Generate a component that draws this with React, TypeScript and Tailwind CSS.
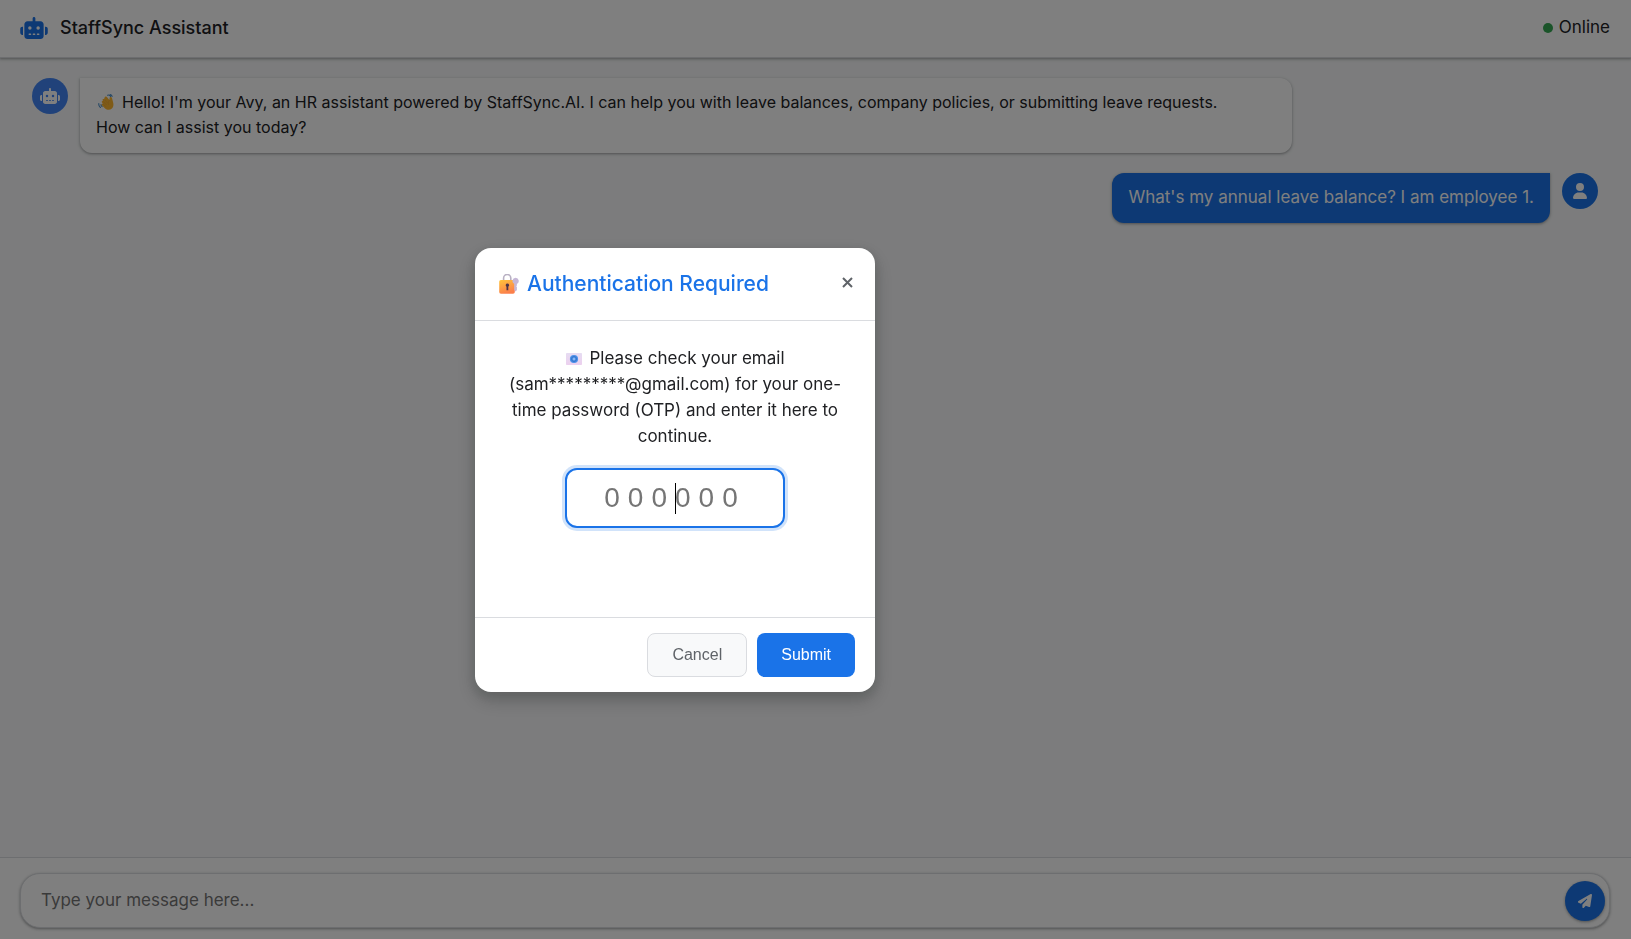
import { FaPaperPlane, FaRobot, FaUser } from "react-icons/fa6";

const cardShadow =
  "shadow-[0_1px_2px_0_rgba(60,64,67,0.3),0_1px_3px_1px_rgba(60,64,67,0.15)]";

function WaveIcon() {
  return (
    <svg viewBox="0 0 16 16" className="mr-2 ml-0.5 inline-block size-4 align-[-2px]" role="img" aria-label="Waving hand">
      <path d="M9.6 1.3c1.2-.6 2.5 0 3 1.3M12.2.6c1 .2 1.7.9 1.9 1.8M.8 9.6c-.2 1.6.3 3 1.6 3.9M3 10.6c0 .9.4 1.6 1.1 2" fill="none" stroke="#4b8fc9" strokeWidth="1.1" strokeLinecap="round" />
      <path d="M7 2.900c.7-.6 1.600-.4 2.100.3l2.200 2.800c.3-.6.2-1.300.3-2 .1-1.200 1.700-1.500 2.200-.4.5 1.300.7 2.800 1.200 4.300.8 2.600.5 5.100-1.100 6.600-1.900 1.700-4.900 1.700-6.800-.1L3.900 11.300c-.8-.9.2-2.100 1.200-1.400L4 8.600c-.8-1.100.4-2.300 1.300-1.300L4.700 6.500c-.6-1 .6-2.100 1.400-1.200l.4.500-.1-.6c-.4-.8-.1-1.700.6-2.300z" fill="#ffb62e" />
      <path d="M6.600 5.600l2.800 3.300M5.400 7.500l2.900 3.200M5.200 10.100l2.200 2.200M11.300 6.400c-1.100 1.300-1.300 2.600-.8 4" fill="none" stroke="#e39a35" strokeWidth="0.5" strokeLinecap="round" />
    </svg>
  );
}

function LockIcon() {
  return (
    <svg viewBox="0 0 20 20" className="size-5" role="img" aria-label="Locked with key">
      <defs>
        <linearGradient id="lock-body" x1="0" y1="0" x2="0.4" y2="1">
          <stop offset="0" stopColor="#ffc53a" />
          <stop offset="1" stopColor="#fb7f4b" />
        </linearGradient>
      </defs>
      <path d="M4.600 8V4a3.600 3.600 0 0 1 7.200 0V8" fill="none" stroke="#b9b1c3" strokeWidth="1.6" />
      <rect x="0.2" y="6" width="15.6" height="13.8" rx="1.8" fill="url(#lock-body)" />
      <path d="M16.600 3.800a3.200 3.200 0 0 1 1.300 6.100v1.500l-.7.800.7.900v2.800l-1.300 1.500-1.300-1.500V9.900a3.200 3.200 0 0 1 1.300-6.100z" fill="#c5b6d6" />
      <path d="M8.400 9.500a1.800 1.800 0 0 1 .9 3.300v3.400H7.500v-3.400a1.800 1.800 0 0 1 .9-3.300z" fill="#4b3346" />
    </svg>
  );
}

function MailIcon() {
  return (
    <svg viewBox="0 0 16 12" className="mr-2 inline-block h-3 w-4 align-[-1px]" role="img" aria-label="E-mail">
      <defs>
        <linearGradient id="mail-body" x1="0" y1="0" x2="0" y2="1">
          <stop offset="0" stopColor="#e6dcf2" />
          <stop offset="1" stopColor="#ecd0ee" />
        </linearGradient>
      </defs>
      <rect width="16" height="12" rx="0.8" fill="url(#mail-body)" />
      <circle cx="8" cy="6" r="4.1" fill="#4a92ea" />
      <circle cx="8" cy="6" r="2.5" fill="none" stroke="#2f66ba" strokeWidth="0.7" />
      <circle cx="8" cy="6" r="1.2" fill="#8db9f2" />
    </svg>
  );
}

function CloseIcon() {
  return (
    <svg viewBox="0 0 11 11" className="size-[11px]" aria-hidden>
      <path d="M1 1l9 9M10 1l-9 9" stroke="currentColor" strokeWidth="2" />
    </svg>
  );
}

function Header() {
  return (
    <header className={`relative flex h-[58px] shrink-0 items-center justify-between border-b border-[#dadce0] bg-white pr-[21px] pb-0.5 pl-5 ${cardShadow}`}>
      <div className="flex items-center gap-3">
        <FaRobot className="h-[22px] w-7 text-[#1a73e8]" aria-hidden />
        <h1 className="text-lg font-medium">StaffSync Assistant</h1>
      </div>
      <p className="flex items-center gap-1.5">
        <span className="size-2.5 rounded-full bg-[#34a853]" />
        Online
      </p>
    </header>
  );
}

function Conversation() {
  return (
    <main className="flex flex-1 flex-col gap-5 py-5 pr-[33px] pl-8">
      <div className="flex items-start gap-3">
        <div className="flex size-9 shrink-0 items-center justify-center rounded-full bg-[#4285f4] text-white">
          <FaRobot className="h-4 w-5" aria-hidden />
        </div>
        <p className={`w-[calc(80%-41px)] rounded-xl rounded-tl-none bg-white px-4 pt-3 pb-[13px] text-base leading-[25px] ${cardShadow}`}>
          <WaveIcon />
          Hello! I'm your Avy, an HR assistant powered by StaffSync.AI. I can help you with leave balances, company
          policies, or submitting leave requests.
          <br />
          How can I assist you today?
        </p>
      </div>
      <div className="flex items-start justify-end gap-3">
        <p className={`rounded-xl rounded-tr-none bg-[#1a73e8] px-4 pt-3 pb-[13px] leading-[25px] text-white ${cardShadow}`}>
          What's my annual leave balance? I am employee 1.
        </p>
        <div className="flex size-9 shrink-0 items-center justify-center rounded-full bg-[#1a73e8] text-white">
          <FaUser className="size-4" aria-hidden />
        </div>
      </div>
    </main>
  );
}

function Composer() {
  return (
    <footer className="border-t border-[#dadce0] bg-white pt-[15px] pr-[21px] pb-[11px] pl-5">
      <form className={`flex h-[55px] items-center rounded-[20px] border border-[#dadce0] bg-white pr-1 pl-5 ${cardShadow}`}>
        <input
          type="text"
          aria-label="Message"
          placeholder="Type your message here..."
          className="min-w-0 flex-1 bg-transparent outline-none placeholder:text-[#757575]"
        />
        <button type="button" aria-label="Send" className={`flex size-10 items-center justify-center rounded-full bg-[#1a73e8] text-white ${cardShadow}`}>
          <FaPaperPlane className="size-3.5" aria-hidden />
        </button>
      </form>
    </footer>
  );
}

function AuthDialog() {
  return (
    <div className="fixed inset-0 flex items-center justify-center bg-black/50 pr-[281px]">
      <section
        role="dialog"
        aria-modal="true"
        aria-labelledby="auth-title"
        className="w-[400px] rounded-2xl bg-white shadow-[0_4px_8px_3px_rgba(60,64,67,0.15),0_8px_20px_rgba(0,0,0,0.2)]"
      >
        <div className="flex h-[73px] items-center justify-between border-b border-[#dadce0] px-5">
          <h2 id="auth-title" className="flex items-center gap-2 pl-1 text-[21px] font-medium text-[#1a73e8]">
            <LockIcon />
            Authentication Required
          </h2>
          <button type="button" aria-label="Close" className="px-0.5 pb-0.5 text-[#5f6368]">
            <CloseIcon />
          </button>
        </div>
        <div className="flex min-h-[296px] flex-col items-center px-8 py-6">
          <p id="otp-help" className="text-center leading-[26px]">
            <MailIcon />
            Please check your email (sam*********@gmail.com) for your one-time password (OTP) and enter it here to
            continue.
          </p>
          <div className="relative mt-[19px]">
            <input
              type="text"
              inputMode="numeric"
              maxLength={6}
              aria-label="One-time password"
              aria-describedby="otp-help"
              placeholder="000000"
              className="h-[60px] w-[220px] rounded-xl border-2 border-[#1a73e8] bg-white text-center font-[Liberation_Sans] text-[28px] tracking-[8px] caret-transparent ring-3 ring-[#1a73e8]/20 outline-none placeholder:text-[#757575]"
            />
            <span className="absolute top-[15px] left-1/2 h-[31px] w-px bg-black" />
          </div>
        </div>
        <div className="flex justify-end gap-2.5 border-t border-[#dadce0] px-5 py-[15px] font-[Liberation_Sans] text-base">
          <button type="button" className="h-11 rounded-lg border border-[#dadce0] bg-[#f8f9fa] px-6 text-[#5f6368]">
            Cancel
          </button>
          <button type="submit" className="h-11 rounded-lg bg-[#1a73e8] px-6 text-white">
            Submit
          </button>
        </div>
      </section>
    </div>
  );
}

export default function App() {
  return (
    <div className="flex min-h-screen flex-col bg-[#f8f9fa] font-[Inter,sans-serif] text-[17px] text-[#202124]">
      <Header />
      <Conversation />
      <Composer />
      <AuthDialog />
    </div>
  );
}
